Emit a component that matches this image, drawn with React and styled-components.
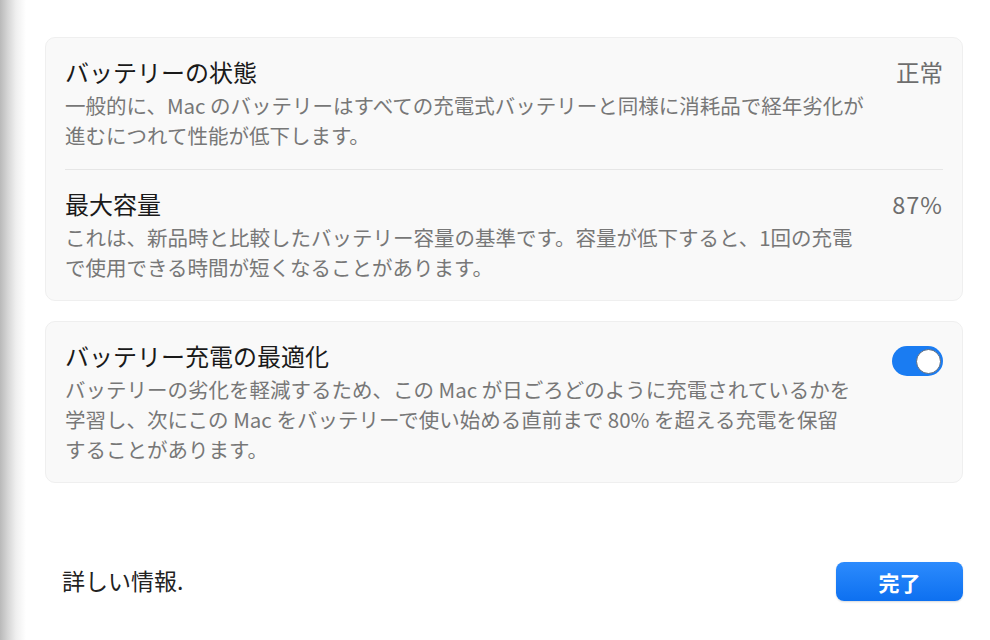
import styled, { createGlobalStyle } from 'styled-components';

const GlobalStyle = createGlobalStyle`
  html, body {
    margin: 0;
    padding: 0;
    height: 640px;
    overflow: hidden;
  }
  body {
    font-family: "Noto Sans CJK JP", "Noto Sans", sans-serif;
    background: linear-gradient(to right, #b9b9b9 0px, #d6d6d6 8px, #efefef 16px, #ffffff 26px);
    color: #222;
  }
`;

const Page = styled.div`
  width: 990px;
  height: 640px;
  box-sizing: border-box;
  padding: 37px 27px 0 45px;
  display: flex;
  flex-direction: column;
`;

const Card = styled.section`
  background: #f9f9f9;
  border: 1px solid #efefef;
  border-radius: 10px;
  padding: 0 19px;
  margin-bottom: 20px;
`;

const Row = styled.div`
  display: flex;
  justify-content: space-between;
  align-items: flex-start;
  padding: ${({ last }) => (last ? '19px 0 18px' : '19px 0 19px')};
  border-bottom: ${({ last }) => (last ? 'none' : '1px solid #e6e6e6')};
`;

const Texts = styled.div`
  display: flex;
  flex-direction: column;
  gap: 3px;
`;

const Title = styled.h2`
  margin: 0;
  font-size: 24px;
  line-height: 30px;
  font-weight: 400;
  color: #1a1a1a;
`;

const Desc = styled.p`
  margin: 0;
  font-size: 20.5px;
  line-height: 30px;
  color: #777;
  white-space: nowrap;
`;

const Value = styled.span`
  font-size: 23.5px;
  line-height: 30px;
  color: #6e6e6e;
  letter-spacing: ${({ wide }) => (wide ? '1px' : '0')};
`;

const Toggle = styled.div`
  width: 51px;
  height: 30px;
  margin-top: 5px;
  border-radius: 15px;
  background: #1a7cf2;
  display: flex;
  align-items: center;
  justify-content: flex-end;
  padding: 0 2px;
  box-sizing: border-box;
`;

const Knob = styled.div`
  width: 25px;
  height: 25px;
  border-radius: 50%;
  background: #fff;
  border: 1px solid #5b6b80;
  box-sizing: border-box;
`;

const Footer = styled.div`
  display: flex;
  justify-content: space-between;
  align-items: center;
  margin-top: 55px;
  padding-left: 17px;
`;

const Link = styled.span`
  font-size: 23px;
  color: #222;
`;

const DoneButton = styled.button`
  width: 127px;
  height: 39px;
  margin-top: 4px;
  border: none;
  border-radius: 8px;
  background: linear-gradient(to bottom, #2c8bfd, #0d70f0);
  color: #fff;
  font-family: inherit;
  font-size: 21px;
  font-weight: 700;
  box-shadow: 0 1px 2px rgba(0, 0, 0, 0.15);
`;

export default function App() {
  return (
    <>
      <GlobalStyle />
      <Page>
        <Card>
          <Row>
            <Texts>
              <Title>バッテリーの状態</Title>
              <Desc>
                一般的に、Mac のバッテリーはすべての充電式バッテリーと同様に消耗品で経年劣化が
                <br />
                進むにつれて性能が低下します。
              </Desc>
            </Texts>
            <Value>正常</Value>
          </Row>
          <Row last>
            <Texts>
              <Title>最大容量</Title>
              <Desc>
                これは、新品時と比較したバッテリー容量の基準です。容量が低下すると、1回の充電
                <br />
                で使用できる時間が短くなることがあります。
              </Desc>
            </Texts>
            <Value wide>87%</Value>
          </Row>
        </Card>

        <Card>
          <Row last>
            <Texts>
              <Title>バッテリー充電の最適化</Title>
              <Desc>
                バッテリーの劣化を軽減するため、この Mac が日ごろどのように充電されているかを
                <br />
                学習し、次にこの Mac をバッテリーで使い始める直前まで 80% を超える充電を保留
                <br />
                することがあります。
              </Desc>
            </Texts>
            <Toggle>
              <Knob />
            </Toggle>
          </Row>
        </Card>

        <Footer>
          <Link>詳しい情報.</Link>
          <DoneButton>完了</DoneButton>
        </Footer>
      </Page>
    </>
  );
}
